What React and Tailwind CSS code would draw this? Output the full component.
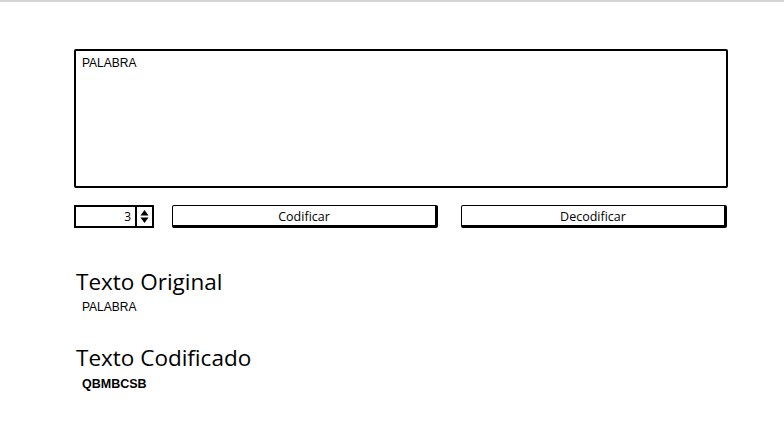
export default function App() {
  return (
    <div className="min-h-screen bg-white border-t-2 border-[#d4d4d4]">
      <div className="pl-[74px] pt-[47px] w-[728px]">
        {/* Text input area */}
        <div className="h-[139px] border-2 border-black rounded-[2px] px-[6px] pt-[5px] font-['Liberation_Sans',sans-serif] text-[12px] text-black leading-[14px]">
          PALABRA
        </div>

        {/* Controls row */}
        <div className="flex items-start mt-[17px] h-[24px] font-['Open_Sans',sans-serif] text-[12.5px] text-black">
          <div className="flex w-[80px] h-[23px] border-2 border-black">
            <div className="flex-1 flex items-center justify-end pr-[4px] text-[12px] leading-none">3</div>
            <div className="w-[17px] border-l-2 border-black flex flex-col items-center justify-center">
              <svg width="9" height="15" viewBox="0 0 9 15">
                <path d="M4.5 1 L8.5 6.5 L0.5 6.5 Z" fill="black" />
                <path d="M4.5 14 L8.5 8.5 L0.5 8.5 Z" fill="black" />
              </svg>
            </div>
          </div>
          <button className="ml-[18px] w-[266px] h-[23px] pt-[3px] border border-black border-r-[3px] border-b-[3px] rounded-[2px] bg-white flex items-center justify-center leading-none">
            Codificar
          </button>
          <button className="ml-[23px] w-[266px] h-[23px] pt-[3px] border border-black border-r-[3px] border-b-[3px] rounded-[2px] bg-white flex items-center justify-center leading-none">
            Decodificar
          </button>
        </div>

        {/* Results */}
        <div className="mt-[40px] pl-[2px] font-['Open_Sans',sans-serif] text-black">
          <h2 className="text-[22.5px] leading-[26px]">Texto Original</h2>
          <p className="pl-[6px] mt-[5px] text-[12px] leading-[14px] font-['Liberation_Sans',sans-serif]">PALABRA</p>
          <h2 className="mt-[31px] text-[22.5px] leading-[26px]">Texto Codificado</h2>
          <p className="pl-[6px] mt-[6px] text-[12.5px] leading-[14px] font-bold font-['Liberation_Sans',sans-serif]">QBMBCSB</p>
        </div>
      </div>
    </div>
  );
}
